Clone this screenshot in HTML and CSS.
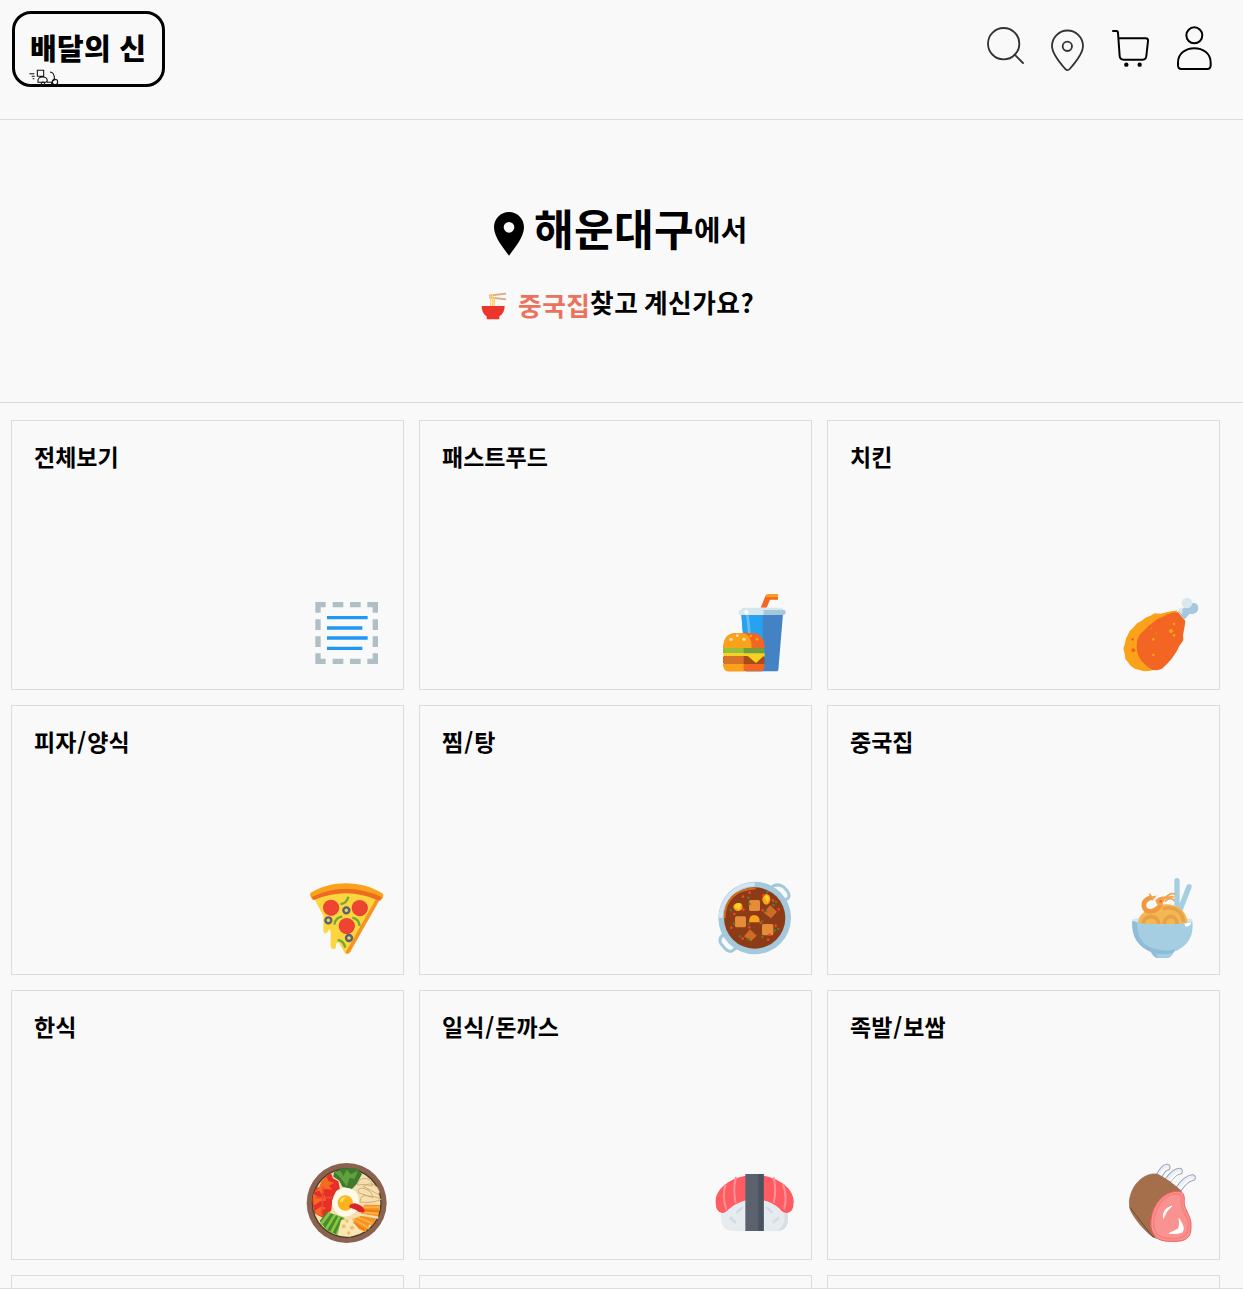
FILE: index.html
```html
<!DOCTYPE html>
<html lang="ko">
<head>
<meta charset="utf-8">
<title>배달의 신</title>
<link rel="stylesheet" href="styles.css">
</head>
<body>
<div class="page">
<header class="header">
  <a class="logo" aria-label="배달의 신">
    <span class="logo-text">배달의 신</span>
    <svg class="scooter" viewBox="84 201 96 54" fill="none" stroke="#111" stroke-width="3.2">
      <path d="M112 208h19v18h-19zM88 218h15M95 226h9M98 233h5M150 213q13 1 13 19v5M114 243q-2-15 14-15 14 0 14 12l-5 4h-25M140 244h16"/><circle cx="129" cy="248" r="5"/><circle cx="165" cy="243" r="8"/><path d="M154 250q3-14 13-14"/>
    </svg>
  </a>
  <nav class="nav">
    <svg viewBox="0 0 819 210" fill="none" stroke-linecap="round" stroke-linejoin="round">
      <g stroke="#333" stroke-width="5.5"><circle cx="101" cy="101" r="47"/><path d="M134 134l25 25"/></g>
      <g stroke="#333" stroke-width="5.5"><path d="M286 177Q246 132 246 108a46.500 46.500 0 0 1 93 0Q339 132 299 177q-6 7-13 0z"/><circle cx="292" cy="109" r="14"/></g>
      <g stroke="#000" stroke-width="6"><path d="M429 63h10q5 0 5 6l5 69q1 11 12 11h57q10 0 11-11l5-45q1-8-7-8h-81"/></g>
      <circle cx="469" cy="164" r="6.500" fill="#000"/><circle cx="509" cy="164" r="6.500" fill="#000"/>
      <g stroke="#000" stroke-width="6"><circle cx="673" cy="76" r="24"/><path d="M634 177q-10 0-10-11v-8c0-58 98-58 98 0v8q0 11-10 11z"/></g>
    </svg>
  </nav>
</header>

<section class="hero">
  <div class="hero-line place">
    <svg class="pin" viewBox="72 66 90 132"><path fill-rule="evenodd" d="M117 66c25 0 45 20 45 46 0 30-29 63-45 85-16-22-45-55-45-85 0-26 20-46 45-46zm0 30a16 16 0 1 0 0 32 16 16 0 0 0 0-32z"/></svg>
    <strong class="district">해운대구</strong><span class="at">에서</span>
  </div>
  <div class="hero-line question">
    <svg class="bowl" viewBox="34 303 78 87"><path d="M58 317l51-6M59 322l50 6" stroke="#dda780" stroke-width="5"/><path d="M63 313v37M69 313v37M74 323v27" stroke="#ffd36b" stroke-width="4"/><path fill="#ee352c" d="M36 348h69q0 22-16 31v9H51v-9q-15-9-15-31z"/></svg>
    <strong class="kind">중국집</strong><span class="ask">찾고 계신가요?</span>
  </div>
</section>

<main class="grid">
  <a class="card"><h2>전체보기</h2>
    <svg viewBox="30 30 270 270"><g fill="#b0bec5"><path d="M76 66h31v16H92v16H76zM128 66h32v16h-32zM180 66h32v16h-32zM232 66h32v32h-16V82h-16zM76 118h16v32H76zM248 118h16v32h-16zM76 169h16v32H76zM248 169h16v32h-16zM76 220h16v16h15v16H76zM128 236h32v16h-32zM180 236h32v16h-32zM248 220h16v32h-32v-16h16z"/></g><path d="M111 113h122M111 144h106M111 174h122M111 205h106" stroke="#2196f3" stroke-width="10"/></svg></a>

  <a class="card"><h2>패스트푸드</h2>
    <svg viewBox="24 30 270 270"><path d="M182 83l14-34q2-6 9-6h29v16h-24l-10 24z" fill="#f26522"/><path d="M197 47q3-4 8-4h29v9h-35z" fill="#f9a01b"/><path d="M124 101h125l-14 168q-1 5-6 5h-91z" fill="#4382c4"/><path d="M124 101h64v173h-50z" fill="#27a2f2"/><path d="M138 102h8l8 75h-8z" fill="#69bdf4"/><rect x="117" y="89" width="140" height="16" rx="8" fill="#a4c8dc"/><path d="M127 83h118l5 7h-59v15h-66a8 8 0 0 1 0-16z" fill="#d5e6ee"/><ellipse cx="139" cy="97" rx="6" ry="7" fill="#fff"/>
    <path d="M70 205q0-46 39-46h46q39 0 39 46z" fill="#f26522"/><path d="M70 205q0-46 39-46h20q28 7 26 46z" fill="#fba21b"/><rect x="69" y="204" width="125" height="16" rx="5" fill="#719f38"/><path d="M74 204h57v16H74q-9-8 0-16z" fill="#97bf39"/><path d="M70 220h124v10H70z" fill="#f9cf20"/><rect x="69" y="228" width="125" height="24" rx="6" fill="#a64c18"/><path d="M75 228h56v24H75q-12-12 0-24z" fill="#d87228"/><path d="M143 228h48l-23 21z" fill="#f9cf20"/><path d="M70 252h124q0 22-14 22H84q-14 0-14-22z" fill="#f26522"/><path d="M70 252h61v22H84q-14 0-14-22z" fill="#fba21b"/><g fill="#fbe0b6"><circle cx="93" cy="178" r="5"/><circle cx="112" cy="167" r="4"/><circle cx="132" cy="178" r="5"/></g><g fill="#fba21b"><circle cx="152" cy="168" r="4"/><circle cx="171" cy="178" r="4"/></g></svg></a>

  <a class="card"><h2>치킨</h2>
    <svg viewBox="18 30 270 270"><path d="M204 94l26-15q11-12 23-10c14 2 15 23 5 29q-9 6-19 3l-16 18z" fill="#a4c8dc"/><circle cx="231" cy="69" r="16" fill="#d9e7ee"/><path d="M204 91l11-9q5 12 0 21z" fill="#d9e7ee"/><path d="M202 90l-6 2-12 2-15 3-17 4-18-1-14 8-11 4-14 10-14 8-10 12-12 11-6 13-5 9-4 19-4 11 4 16 2 16 7 8 7 11 14 10 14 4 15 4 14-1 12-3z" fill="#fba21b"/><path d="M204 96l-17 2-15 5-14 7-16 7-14 11-12 9-13 14-14 13-7 16-2 17 1 17 6 17 8 12 15 15 17 12 15 1 14-5 15-14 14-16 14-20 9-18 12-17-1-16 4-20 3-22-10-12z" fill="#f26522"/><g fill="#fba21b"><circle cx="183" cy="153" r="6"/><circle cx="192" cy="132" r="4"/><circle cx="192" cy="166" r="4"/><circle cx="130" cy="178" r="4"/><circle cx="130" cy="225" r="4"/><circle cx="139" cy="160" r="2"/><circle cx="124" cy="145" r="2"/></g><g fill="#f26522"><circle cx="68" cy="178" r="4"/><circle cx="70" cy="211" r="6"/></g></svg></a>

  <a class="card"><h2>피자<span class="slash">/</span>양식</h2>
    <svg viewBox="30 30 270 270"><path d="M73 102q97-42 192-2l-87 163q-8 8-15-2l-17-29q-9 2-8 12 0 8-8 8t-8-9v-45q-7-9-8 1-6 12-14 1v-48z" fill="#fdd53e"/><path d="M260 98l9 6-89 158q-7 8-14 1z" fill="#f79421"/><path d="M61 84c64-40 154-39 218 2q4 10-8 21-101-48-202-1-11-12-8-22z" fill="#fba21b"/><path d="M65 96q105-50 211 1l-8 10q-98-44-197-2z" fill="#ee6b22"/><g fill="#ee4432"><circle cx="123" cy="128" r="24"/><circle cx="209" cy="129" r="24"/><circle cx="170" cy="183" r="24"/></g><path d="M143 116a23 23 0 0 1-26 34M229 117a23 23 0 0 1-26 34M190 171a23 23 0 0 1-26 34" fill="none" stroke="#d9362d" stroke-width="2"/><g fill="none" stroke="#6aac36" stroke-width="7"><path d="M175 95q-5 21-24 22M157 155q-20 1-24 24M187 158q20 4 22 25M143 225q17 1 23 23"/></g><g fill="#e5cf75" stroke="#58616c" stroke-width="7"><circle cx="169" cy="136" r="9"/><circle cx="115" cy="166" r="9"/><circle cx="177" cy="219" r="9"/></g></svg></a>

  <a class="card"><h2>찜<span class="slash">/</span>탕</h2>
    <svg viewBox="24 30 270 270"><g fill="none" stroke="#a4c8dc" stroke-width="9"><path d="M212 68q18-15 38-3l12 13q9 13 2 22l-14 8M72 208q-17 10-10 27l14 17q12 10 20 6l16-11"/></g><circle cx="164" cy="159" r="109" fill="#a4c8dc"/><path d="M62 159a102 102 0 0 1 102-101" fill="none" stroke="#d3e5ee" stroke-width="12"/><circle cx="164" cy="159" r="92" fill="#8d3b17"/><path d="M74 160q0-84 93-90" fill="none" stroke="#d26a22" stroke-width="6"/><g fill="#e48c38"><rect x="147" y="105" width="33" height="33" rx="5"/><rect x="105" y="154" width="33" height="33" rx="5"/><rect x="186" y="177" width="34" height="34" rx="5"/></g><g fill="#ce6c28"><path d="M210 121l21 19-18 20-22-17zM150 193l20 19-17 17-21-15z"/></g><g fill="#fba21b"><ellipse cx="199" cy="103" rx="12" ry="16"/><ellipse cx="114" cy="126" rx="14" ry="12"/><path d="M147 172q0-22 16-22 18 2 16 22z"/></g><path d="M192 93q12-7 16 8l-6 12zM102 125q10-16 23-8l-8 17z" fill="#ffd128"/>
    <path d="M149 83h.1M129 95h.1M190 91h.1M219 106h.1M103 147h.1M130 134h.1M94 188h.1M182 174h.1M148 187h.1M128 221h.1M204 224h.1M236 133h.1M209 209h.1M227 182h.1M188 136h.1" stroke="#ef442b" stroke-width="8" stroke-linecap="round"/><path d="M202 82h.1M145 98h.1M148 117h.1M92 136h.1M102 176h.1M146 177h.1M186 170h.1M220 121h.1M228 111h.1M198 139h.1M224 196h.1M235 192h.1M187 216h.1M146 223h.1M120 214h.1" stroke="#537b35" stroke-width="8" stroke-linecap="round"/></svg></a>

  <a class="card"><h2>중국집</h2>
    <svg viewBox="18 30 270 270"><path d="M201 47v91M237 65l-27 70" stroke="#a6cee2" stroke-width="16" stroke-linecap="round"/><path d="M67 163q90-23 180 0v18H67z" fill="#d7e5ed"/><path d="M84 178c1-32 24-42 44-45 20-27 105-22 105 45z" fill="#f4b851"/><g fill="none" stroke="#e8a04b" stroke-width="11"><path d="M99 178q2-22 23-23 22 0 25 23M163 178q1-23 20-24 16 0 19 24M158 131q54-12 63 40"/></g><path d="M126 97q-28 8-24 28 4 16 22 14 20-3 29-22" fill="none" stroke="#f0993f" stroke-width="14"/><path d="M119 88l5 9 10-2-7 9M142 106q10-11 23-9l11-7q10-6 18-3M166 108q16-13 26-2M164 101q13-7 27-5" fill="none" stroke="#f2a14c" stroke-width="5" stroke-linecap="round"/><path d="M136 106q14-17 30-7l-10 22q-15 5-20-15z" fill="#f3a34a"/><circle cx="152" cy="109" r="4" fill="#ef6350"/><path d="M67 168q22 10 87 10 63 0 93-8 8 64-56 91-8 18-22 18h-25q-13-1-21-18-61-26-56-93z" fill="#a6cee2"/><path d="M67 168l15 4q-4 71 63 82 30 5 51-1l-5 8q-9 18-22 18h-25q-13-1-21-18-61-26-56-93z" fill="#8fbdd8"/><path d="M137 266q31 5 52-2-8 13-20 14h-25z" fill="#a6cee2"/><path d="M223 176l20-4q1 12-16 13z" fill="#fff"/></svg></a>

  <a class="card"><h2>한식</h2>
    <svg viewBox="30 30 270 270"><circle cx="170" cy="159" r="120" fill="#8b624f"/><circle cx="170" cy="159" r="105" fill="#463e23"/><circle cx="170" cy="159" r="101" fill="#f4dfb0"/><path d="M132 67l25-12h42l17 17-16 30-14 15-29-7-9-18-18-12z" fill="#3e7b31"/><path d="M133 67l19-4 8 16 10-20 12 14 22-10-10 24-15-3-9 25-13-18-8-11z" fill="#61a13b"/><path d="M105 82l18-12 6 15 16 9 6 30-24 25-3 32-23 24-28-16-7-40 11-36 14-2z" fill="#e62f26"/><path d="M95 92l14-13 7 15 17 4-16 9 10 12-23-3-9 18-7-12-15 5 13-13zM69 131l22 13 14-8 3 16-17 2-20 13zM75 181l20-12 13 5-17 10 8 15-22-8z" fill="#f66a24"/><path d="M76 143h50M100 110l-5 85" stroke="#ef4939" stroke-width="5"/><path d="M111 185l52 19-22 50-32-14-20-27z" fill="#4b8d2e"/><path d="M120 187l-27 36M135 194l-27 44M149 199l-25 48M162 206l-21 46" stroke="#8bc640" stroke-width="8"/><path d="M222 164l48 1-5 33-18 28-60-18 24-9z" fill="#f89120"/><path d="M187 206l54 12-14 28-22-10z" fill="#f89120"/><path d="M222 172h47M218 187l46 4M191 207l47 29M204 202l42 18" stroke="#ffb13f" stroke-width="6"/><path d="M207 193l58 10" stroke="#f4dfb0" stroke-width="7"/><path d="M216 180l50 4M187 216l37 24" stroke="#ee731d" stroke-width="4"/><g fill="#f8dfb0" stroke="#c8a66d" stroke-width="2.500"><path d="M202 105q5-24 28-19 17 6 17 22-20-8-45-3zM220 110q23-18 42 2 10 14 4 22-26-15-46-24zM205 128q-3-18 18-12 25 8 25 27-22-8-43-15zM210 156q1-25 27-18 25 2 37 10-28 13-64 8z"/></g><path d="M153 211l28-5 29 38-29 16-38-6z" fill="#fae5b5"/><g fill="#eec35f"><circle cx="171" cy="213" r="5"/><circle cx="161" cy="229" r="6"/><circle cx="186" cy="233" r="6"/><circle cx="176" cy="249" r="5"/></g><path d="M139 123q20-18 49-4 20 8 18 38 1 33-31 42-31 3-43-22-13-23 7-54z" fill="#fff9e9"/><circle cx="166" cy="159" r="23" fill="#fbb320"/><path d="M150 155q2-18 21-12-12 2-12 12z" fill="#ffe05a"/><path d="M180 164q14-9 27 0 17 7 17 22-14 5-27-7l-20-7z" fill="#db252b"/></svg></a>

  <a class="card"><h2>일식<span class="slash">/</span>돈까스</h2>
    <svg viewBox="24 30 270 270"><path d="M63 166q45-38 101-38t100 38v44q-2 33-35 33H98q-33-2-35-34z" fill="#e6ebef"/><path d="M253 176l11-6v40q-2 33-35 33 24-13 24-34z" fill="#d8dee4"/><path d="M47 157c-3-44 55-82 117-82s120 38 117 82q0 31-20 32-12 0-22-13-33-28-75-28t-77 29q-11 12-20 12-20-2-20-32z" fill="#ff5b63"/><path d="M108 81q-10 37-1 78M77 103q-12 36 2 76M221 82q9 37 0 77M249 103q14 35 3 75" fill="none" stroke="#ff9095" stroke-width="6"/><path d="M136 72h55v171h-55z" fill="#5b626e"/><path d="M175 72h16v171h-16z" fill="#4b525f"/><path d="M112 186l14-13M92 204l13 12M201 174l14 12M221 216l14-12" stroke="#d4dce2" stroke-width="8" stroke-linecap="round"/></svg></a>

  <a class="card"><h2>족발<span class="slash">/</span>보쌈</h2>
    <svg viewBox="18 30 270 270"><path d="M148 77q13-25 23-25M174 91q20-27 34-27M205 118q22-33 42-35" fill="none" stroke="#9ca5b2" stroke-width="21" stroke-linecap="round"/><path d="M148 77q13-25 23-25M174 91q20-27 34-27M205 118q22-33 42-35" fill="none" stroke="#eaf0f8" stroke-width="15" stroke-linecap="round"/><path d="M151 76q14-20 21-21M181 92q16-22 27-24M211 117q21-27 35-30" fill="none" stroke="#fff" stroke-width="5"/><path d="M58 154c6-56 51-89 85-81q30 14 71 50l-37 124-47 15q-35-26-61-67-13-18-11-41z" fill="#a56f4b" stroke="#956c51" stroke-width="2"/><path d="M60 172l66 86 14 8" fill="none" stroke="#493a2f" stroke-width="2"/><path d="M206 124c23 4 15 25 17 39 1 15 22 38 20 66 1 42-24 46-61 45-29 0-46-6-57-33-12-43 18-119 81-117z" fill="#f99391" stroke="#f15a54" stroke-width="3"/><path d="M204 131c17 5 8 22 11 37 4 18 22 36 20 61-1 32-19 38-54 37-26-1-39-6-48-29-9-39 16-105 71-106z" fill="none" stroke="#f5807e" stroke-width="5"/><path d="M160 205q-3-29 26-37-18 13-26 37zM207 206q20 29 9 41-13 5-38 3l25-12q9-10 4-32z" fill="#fff" stroke="#fff" stroke-width="3" stroke-linejoin="round"/></svg></a>

  <a class="card"></a><a class="card"></a><a class="card"></a>
</main>
<footer class="footer"></footer>
</div>
</body>
</html>
```
FILE: styles.css
```css
* { box-sizing: border-box; }
body {
  margin: 0;
  background: #f9f9f9;
  color: #000;
  font-family: "Noto Sans CJK KR", "Noto Sans", sans-serif;
  overflow: hidden;
}
.page { display: flex; flex-direction: column; height: 1289px; }
.header {
  flex: none;
  display: flex;
  justify-content: space-between;
  height: 120px;
  padding: 10px 0 0 12px;
  border-bottom: 1px solid #dcdcdc;
}
.logo {
  position: relative;
  width: 153px;
  height: 76px;
  margin-top: 1px;
  padding: 13px 0 0 15px;
  border: 3px solid #000;
  border-radius: 19px;
}
.logo-text {
  display: block;
  font-size: 29px;
  line-height: 40px;
  font-weight: 900;
  letter-spacing: 0.300px;
  white-space: nowrap;
}
.scooter { position: absolute; left: 13px; bottom: -2px; width: 32px; height: 18px; }
.nav { width: 273px; }
.nav svg { display: block; width: 273px; height: 70px; }
.hero {
  flex: none;
  height: 283px;
  padding-top: 80px;
  border-bottom: 1px solid #dcdcdc;
}
.hero-line { display: flex; align-items: flex-start; white-space: nowrap; font-weight: 700; }
.place { height: 70px; padding-left: 494px; }
.pin { width: 30px; height: 44px; margin: 12px 10px 0 0; }
.district { width: 160px; font-size: 43.200px; line-height: 60px; margin-top: -3px; letter-spacing: 0.300px; font-weight: 700; }
.at { font-size: 28.800px; line-height: 60px; margin-top: -1px; letter-spacing: 0.200px; }
.question { padding-left: 481px; }
.bowl { width: 26px; height: 29px; margin: 21px 11px 0 0; }
.kind { width: 72px; font-size: 25.700px; line-height: 40px; margin-top: 15px; letter-spacing: 0.500px; font-weight: 700; color: #e9735c; }
.ask { font-size: 25.700px; line-height: 40px; margin-top: 12px; letter-spacing: 0.500px; word-spacing: -2px; }
.grid {
  flex: 1;
  min-height: 0;
  overflow: hidden;
  display: grid;
  grid-template-columns: repeat(3, 393px);
  grid-auto-rows: 270px;
  gap: 15px;
  padding: 17px 0 0 11px;
}
.card {
  display: flex;
  flex-direction: column;
  justify-content: space-between;
  padding: 19px 13px 9px 22px;
  border: 1px solid #dcdcdc;
}
.card h2 { margin: 0; font-size: 23px; line-height: 32px; font-weight: 700; }
.slash { padding: 0 1px; }
.card svg { align-self: flex-end; width: 90px; height: 90px; }
.footer { flex: none; height: 1px; background: #dcdcdc; }
```
